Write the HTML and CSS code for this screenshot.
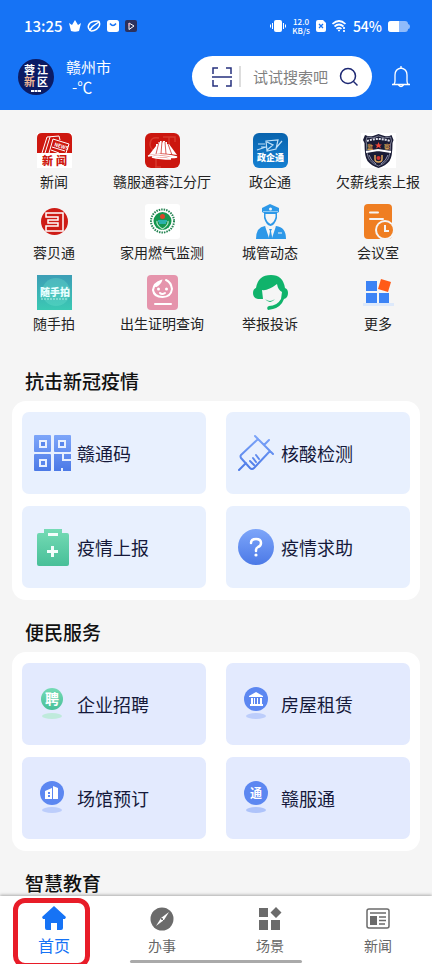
FILE: index.html
```html
<!DOCTYPE html>
<html lang="zh-CN">
<head>
    <meta charset="UTF-8">
    <meta name="viewport" content="width=device-width, initial-scale=1.0">
    <title>首页</title>
    <link rel="stylesheet" href="styles.css">
</head>
<body>
    <header class="header">
        <div class="status">
            <span class="status-time">13:25</span>
            <svg width="12" height="12" viewBox="0 0 12 12" fill="#fff"><path d="M0 3l3 2 3-5 3 5 3-2-2 8q-4 1.500-8 0z"/></svg>
            <svg width="14" height="12" viewBox="0 0 14 12" fill="none" stroke="#fff" stroke-width="1.500"><path d="M3 10C0 8 1 3 6 1.500q5-1 6 0c-1 2-5 3-7 5.500-1.500 2-3 4-2 3zM12 2c2 3-1 7-5 8.500-2 .7-4 .5-4-.5"/></svg>
            <svg width="12" height="12" viewBox="0 0 12 12"><rect width="12" height="12" rx="2.500" fill="#fff"/><path d="M3 3.500q3 4 6 0" fill="none" stroke="#1673f5" stroke-width="1.500"/></svg>
            <svg width="12" height="12" viewBox="0 0 12 12"><rect width="12" height="12" rx="2" fill="#2c315c"/><path d="M4 3l5 3-5 3.500z" fill="#2c315c" stroke="#fff"/><path d="M4 3v3" stroke="#e58aa5"/></svg>
            <span class="status-space"></span>
            <svg width="16" height="12" viewBox="0 0 16 12" fill="#fff"><rect x="4" width="8" height="12" rx="2"/><path d="M2 3h1v6H2zM0 4.500h1v3H0zM13 3h1v6h-1zM15 4.500h1v3h-1z"/></svg>
            <span class="status-speed">12.0<br>KB/s</span>
            <svg width="10" height="12" viewBox="0 0 10 12"><path d="M2 0h5l3 3v7q0 2-2 2H2q-2 0-2-2V2q0-2 2-2z" fill="#fff"/><path d="M3 4l4 4M7 4L3 8" stroke="#1673f5" stroke-width="1.300"/></svg>
            <svg width="15" height="12" viewBox="0 0 15 12" fill="none" stroke="#fff" stroke-width="1.700"><path d="M.5 4q6.500-6 13 0M2.500 6.500q4.500-4 9 0M4.500 8.800q2.500-2 5 0"/><path d="M6 10.500h2M12 7v2M12 10v2"/></svg>
            <span class="status-power">54%</span>
            <svg width="22" height="11" viewBox="0 0 22 11"><rect width="20" height="11" rx="3" fill="#8fbbfb"/><path d="M20 3q2 0 2 2.500T20 8z" fill="#8fbbfb"/><path d="M3 0h8v11H3q-3 0-3-3V3q0-3 3-3z" fill="#fff"/></svg>
        </div>
        <div class="topbar">
            <svg class="logo" width="36" height="36" viewBox="0 0 36 36">
                <circle cx="18" cy="18" r="18" fill="#0b1b64"/>
                <g font-size="11" font-weight="700" fill="#fff"><text x="6" y="15">蓉</text><text x="19" y="15">江</text><text x="6" y="27" fill="#eeb596">新</text><text x="19" y="27">区</text></g>
                <path d="M13 32h10" stroke="#fff" stroke-width="2" stroke-dasharray="3 .5"/>
            </svg>
            <div class="city"><span>赣州市</span><span class="city-temp">-℃</span></div>
            <form class="search">
                <svg width="20" height="20" viewBox="0 0 20 20" fill="none" stroke="#26317e" stroke-width="1.500"><path d="M1 7V1h5M14 1h5v6M1 13v6h5M14 19h5v-6M0 10h20"/></svg>
                <span class="search-line"></span>
                <input type="text" class="search-input" placeholder="试试搜索吧" aria-label="搜索">
                <button type="submit" class="icon-button" aria-label="搜索"><svg width="20" height="20" viewBox="0 0 20 20" fill="none" stroke="#1d2873" stroke-width="1.500"><circle cx="9" cy="9" r="7.500"/><path d="M14.500 14.500l4 4"/></svg></button>
            </form>
            <button type="button" class="icon-button bell" aria-label="消息"><svg width="18" height="22" viewBox="0 0 18 22" fill="none" stroke="#fff" stroke-width="1.300"><path d="M9 0v2M0 18.500h18M2 18q1-1 1-3V9q0-6 6-7 6 1 6 7v6q0 2 1 3M6.500 19q2.500 3 5 0"/></svg></button>
        </div>
    </header>

    <main class="content">
        <nav class="services">
            <a href="#" class="service">
                <svg width="35" height="35" viewBox="0 0 35 35"><rect width="35" height="35" fill="#fff"/><path d="M0 20V5q0-5 5-5h25q5 0 5 5v15z" fill="#ce170f"/><g fill="none" stroke="#fff"><path d="M5 20l5-16 12-1 1 4M8 20l5-16"/><path d="M12 20l4-14 16 5-3 9M15 14l13 4M14 17l8 3" /></g><text x="17" y="13" font-size="5" font-weight="700" fill="#fff" transform="rotate(17 17 13)">NEWS</text><text x="5" y="32" font-size="11" font-weight="900" fill="#ce170f">新</text><text x="19" y="32" font-size="11" font-weight="900" fill="#ce170f">闻</text></svg>
                <span>新闻</span>
            </a>
            <a href="#" class="service">
                <svg width="35" height="35" viewBox="0 0 35 35"><rect width="35" height="35" rx="6" fill="#cb160e"/><path d="M14 5Q5 3 5 12q1 7 9 5M18 4h12v5M24 4v16M11 23v11M10 34h6" fill="none" stroke="#d8392d" stroke-width="1.500"/><path d="M4 22l7-9v-2h2V9h2V8h2v2l1-2h2v1h2v2h2l8 11q-14-3-28 0z" fill="#fff"/><path d="M14 9l-3 12M17 8l-1 13M20 9l1 12M23 11l4 11" stroke="#cb160e" stroke-width=".7"/><path d="M3 23q14-3 29 1-5 1-10 0-10-1-15 0 8 2 19 2" fill="none" stroke="#fff" stroke-width="1.400"/></svg>
                <span>赣服通蓉江分厅</span>
            </a>
            <a href="#" class="service">
                <svg width="35" height="35" viewBox="0 0 35 35"><defs><linearGradient id="sky" x2="0" y2="1"><stop stop-color="#0863ad"/><stop offset="1" stop-color="#1580d2"/></linearGradient></defs><rect width="35" height="35" rx="6" fill="url(#sky)"/><path d="M13 8l12-1-2 9-9 2zM14 9l6 3-6 5M23 15l6-7M5 11h7M8 14h5M4 17l9-3" fill="none" stroke="#bfe0f8" stroke-width="1.200"/><text x="4" y="28" font-size="9" font-weight="900" fill="#fff">政企通</text></svg>
                <span>政企通</span>
            </a>
            <a href="#" class="service">
                <svg width="35" height="35" viewBox="0 0 35 35"><rect width="35" height="35" fill="#fff"/><path d="M17.500 1l6 2q4 1 7-1l2 5-1 3q0 14-3 18-4 5-11 7-7-2-11-7-3-4-3-18L2 7l2-5q4 2 8 1z" fill="#191b35"/><path d="M17.500 3l6 2 6-1 1 4-1 3q0 11-3 16-3 4-9 6-6-2-9-6-3-5-3-16L5 8l1-4 6 1z" fill="none" stroke="#a3a6ba" stroke-width=".7"/><path d="M6 8q11-4 23 0" fill="none" stroke="#dfe0e9" stroke-width="2" stroke-dasharray="2 1"/><text x="6" y="16" font-size="6" font-weight="700" fill="#d39c51">监</text><text x="23" y="16" font-size="6" font-weight="700" fill="#d39c51">察</text><path d="M17.500 9l1 2.500H21l-2 1.500 1 2.500-2.500-1.500-2.500 1.500 1-2.500-2-1.500h2.500z" fill="#ef4538"/><path d="M5 19l12-2 13 2" fill="none" stroke="#fff" stroke-width="1.800"/><path d="M14 22v4q0 3 3.500 3t3.500-3v-4" fill="none" stroke="#dba65e" stroke-width="1.500"/><circle cx="17.500" cy="25" r="2" fill="#d43232"/><path d="M8 22q2 6 7 9M27 22q-2 6-7 9" fill="none" stroke="#9296b3"/></svg>
                <span>欠薪线索上报</span>
            </a>
            <a href="#" class="service">
                <svg width="35" height="35" viewBox="0 0 35 35"><circle cx="17.500" cy="17.500" r="13.500" fill="#ce1c16"/><path d="M9 9h17v18H9v-5h12v-3H11v-3h10v-3H9z" fill="none" stroke="#fff" stroke-width="1.500"/></svg>
                <span>蓉贝通</span>
            </a>
            <a href="#" class="service">
                <svg width="35" height="35" viewBox="0 0 35 35"><rect width="35" height="35" rx="3" fill="#fff"/><circle cx="17.500" cy="17" r="11.500" fill="none" stroke="#258453" stroke-width="2" stroke-dasharray="1.500 1"/><circle cx="17.500" cy="17" r="9" fill="#15964f"/><path d="M12 17q-1 4 5.500 8 6.500-4 5.500-8" fill="none" stroke="#b9e7c8" stroke-width="1.200"/><circle cx="17.500" cy="12.500" r="2.500" fill="#db4427"/><path d="M13 17h9M14 19h7" stroke="#35bacc" stroke-width="1.500"/></svg>
                <span>家用燃气监测</span>
            </a>
            <a href="#" class="service">
                <svg width="35" height="35" viewBox="0 0 35 35" fill="#2d98e8"><path d="M9 4l8-4 9 4v4l-2 1v5q-2 7-6.500 8Q13 21 11 14V9L9 8z"/><path d="M12.500 10h10v3q-1 5-5 7-4-2-5-7z" fill="#f5f5f5"/><circle cx="17.500" cy="5" r="1.500" fill="#f5f5f5"/><path d="M10 7.500h15" stroke="#8cc9f4"/><path d="M3 35q0-12 9-13l5.500 4 5.500-4q10 1 10 13z"/><path d="M12 22l4 12 1.500-6L19 34l4-12-5.500 3z" fill="#f5f5f5"/><path d="M16 25h3l-1 2 1 6-1.500 2-1.500-2 1-6z"/><path d="M25 29h4" stroke="#f5f5f5"/></svg>
                <span>城管动态</span>
            </a>
            <a href="#" class="service">
                <svg width="35" height="35" viewBox="0 0 35 35"><rect x="3" y="0" width="28" height="35" rx="4" fill="#ef7e22"/><path d="M9 8.500h8M9 15h13" stroke="#f5f5f5" stroke-width="2" stroke-linecap="round"/><circle cx="24" cy="26" r="10" fill="#f5f5f5"/><circle cx="24" cy="26" r="8" fill="#ef7e22"/><path d="M24 21v6h4" fill="none" stroke="#f5f5f5" stroke-width="2"/></svg>
                <span>会议室</span>
            </a>
            <a href="#" class="service">
                <svg width="35" height="35" viewBox="0 0 35 35"><defs><linearGradient id="sea" x2="0" y2="1"><stop stop-color="#3c9eb6"/><stop offset="1" stop-color="#3bc9b3"/></linearGradient></defs><rect width="35" height="35" fill="url(#sea)"/><circle cx="19" cy="17" r="14" fill="#69dfce" opacity=".35"/><text x="3" y="21" font-size="10" font-weight="900" fill="#e9ffff">随手拍</text><path d="M4 24h27" stroke="#b9f0e9" stroke-dasharray="2 1"/></svg>
                <span>随手拍</span>
            </a>
            <a href="#" class="service">
                <svg width="35" height="35" viewBox="0 0 35 35"><rect x="2" width="31" height="35" rx="4" fill="#e594ac"/><g fill="none" stroke="#fff" stroke-width="2" stroke-linecap="round"><path d="M21 5q5 2 6 9-1 8-9.500 8T8 15q1-7 8-9-1 3-5 5"/><path d="M15 18q2 2 5 0M10 29h16"/></g><circle cx="13.500" cy="14" r="1.500" fill="#fff"/><circle cx="21.500" cy="14" r="1.500" fill="#fff"/></svg>
                <span>出生证明查询</span>
            </a>
            <a href="#" class="service">
                <svg width="35" height="35" viewBox="0 0 35 35"><path d="M3 13Q5 0 18 0q12 0 14 13 3 1 3 5 0 5-4 6-3 8-11 10l-5 1q-2-3 1-4 8 0 12-7l1-7q-4-2-5-8Q15 16 9 15l1 9H5q-5-1-5-6 0-4 3-5z" fill="#10b36b"/><path d="M12 24q5 4 10 0-5 6-10 0z" fill="#10b36b"/></svg>
                <span>举报投诉</span>
            </a>
            <a href="#" class="service">
                <svg width="35" height="35" viewBox="0 0 35 35"><path d="M2 28h31v3H2z" fill="#dde9fb"/><path d="M5 6h11v10H5zM5 18h11v10H5zM18 18h10v10H18z" fill="#3c83f5"/><path d="M20 4l10 3-3 10-10-3z" fill="#ff5b18"/></svg>
                <span>更多</span>
            </a>
        </nav>

        <section class="section">
            <h2 class="section-title">抗击新冠疫情</h2>
            <div class="card">
                <a href="#" class="tile">
                    <svg width="38" height="38" viewBox="0 0 38 38"><defs><linearGradient id="blue" gradientUnits="userSpaceOnUse" x1="0" y1="0" x2="0" y2="38"><stop stop-color="#7fa7fa"/><stop offset="1" stop-color="#4a78e6"/></linearGradient></defs><path d="M2 1h15q1 0 1 1v15q0 1-1 1H2q-1 0-1-1V2q0-1 1-1zM22 1h15q1 0 1 1v15q0 1-1 1H22q-1 0-1-1V2q0-1 1-1zM2 20h15q1 0 1 1v15q0 1-1 1H2q-1 0-1-1V21q0-1 1-1zM21 20h8v7h9v10h-8v-3h-2v3h-7zM31 20h7v5h-7z" fill="url(#blue)"/><path d="M6 6h8v8H6zM25 6h8v8h-8zM6 25h8v8H6z" fill="#e8f0fe"/><path d="M8 8h4v4H8zM27 8h4v4h-4zM8 27h4v4H8z" fill="#5a87ec"/></svg>
                    <span>赣通码</span>
                </a>
                <a href="#" class="tile">
                    <svg width="38" height="38" viewBox="0 0 38 38" fill="none" stroke="url(#blue)" stroke-width="2" stroke-linecap="round" stroke-linejoin="round"><path d="M18 2l18 18M27 11l5-5M21 5L4 21q-1 1 0 3l9 10q2 2 4 0l16-17M9 29l-7 7M13 27l4 4M16 24l3 4M19 21l3 4"/></svg>
                    <span>核酸检测</span>
                </a>
                <a href="#" class="tile">
                    <svg width="38" height="38" viewBox="0 0 38 38"><defs><linearGradient id="green" x2="0" y2="1"><stop stop-color="#75dbb5"/><stop offset="1" stop-color="#48bf98"/></linearGradient></defs><path d="M11 1h18v4h5q2 0 2 2v29q0 2-2 2H6q-2 0-2-2V7q0-2 2-2h5z" fill="url(#green)"/><path d="M15 5h10v3H15zM18 18h3v4h4v3h-4v4h-3v-4h-4v-3h4z" fill="#f3fdfb"/></svg>
                    <span>疫情上报</span>
                </a>
                <a href="#" class="tile">
                    <svg width="38" height="38" viewBox="0 0 38 38"><circle cx="19" cy="19" r="18" fill="url(#blue)"/><path d="M14 15q0-4 5-4t5 4q0 3-3 4-2 1-2 3v1" fill="none" stroke="#fff" stroke-width="2.500" stroke-linecap="round"/><circle cx="19" cy="27" r="1.600" fill="#fff"/></svg>
                    <span>疫情求助</span>
                </a>
            </div>
        </section>

        <section class="section">
            <h2 class="section-title">便民服务</h2>
            <div class="card card-violet">
                <a href="#" class="tile">
                    <svg width="38" height="38" viewBox="0 0 38 38"><ellipse cx="19" cy="31" rx="10" ry="3" fill="#bfeadc"/><circle cx="19" cy="14" r="11" fill="url(#green)"/><text x="12" y="19" font-size="14" font-weight="700" fill="#fff">聘</text></svg>
                    <span>企业招聘</span>
                </a>
                <a href="#" class="tile">
                    <svg width="38" height="38" viewBox="0 0 38 38"><ellipse cx="19" cy="31" rx="10" ry="3" fill="#bccdfb"/><circle cx="19" cy="14" r="12" fill="#5c87f1"/><path d="M12 11l7-4 7 4v1H12zM14 13h2v6h-2zM17 13h1v6h-1zM20 13h1v6h-1zM23 13h2v6h-2zM13 19h13v2H13z" fill="#fff"/></svg>
                    <span>房屋租赁</span>
                </a>
                <a href="#" class="tile">
                    <svg width="38" height="38" viewBox="0 0 38 38"><ellipse cx="19" cy="31" rx="10" ry="3" fill="#bccdfb"/><circle cx="19" cy="14" r="12" fill="#5c87f1"/><path d="M12 20v-8l7-3v11zM20 20V7l5 2v11z" fill="#fff"/><path d="M15 13h2v2h-2zM15 16h2v2h-2z" fill="#5c87f1"/></svg>
                    <span>场馆预订</span>
                </a>
                <a href="#" class="tile">
                    <svg width="38" height="38" viewBox="0 0 38 38"><ellipse cx="19" cy="31" rx="10" ry="3" fill="#aec3fa"/><circle cx="19" cy="14" r="12" fill="#5c87f1"/><text x="13" y="19" font-size="12" font-weight="700" fill="#fff">通</text></svg>
                    <span>赣服通</span>
                </a>
            </div>
        </section>

        <section class="section">
            <h2 class="section-title">智慧教育</h2>
        </section>
    </main>

    <nav class="tabbar">
        <a href="#" class="tab active">
            <svg width="26" height="26" viewBox="0 0 26 26"><path d="M13 1l12 11-1 2h-2v9q0 2-2 2h-4v-7h-6v7H6q-2 0-2-2v-9H2l-1-2z" fill="#1673f5"/></svg>
            <span>首页</span>
        </a>
        <a href="#" class="tab">
            <svg width="26" height="26" viewBox="0 0 26 26"><circle cx="13" cy="14" r="11.500" fill="#6b6b6b"/><path d="M20 7l-5 8-8 6 5-8z" fill="#fff"/><path d="M11 12l4 4" stroke="#6b6b6b"/><circle cx="13" cy="14" r="1" fill="#6b6b6b"/></svg>
            <span>办事</span>
        </a>
        <a href="#" class="tab">
            <svg width="26" height="26" viewBox="0 0 26 26" fill="#6b6b6b"><path d="M2 3h9v9H2zM2 15h9v10H2zM14 15h9v10h-9zM19 2l5.500 5.500L19 13l-5.500-5.500z"/></svg>
            <span>场景</span>
        </a>
        <a href="#" class="tab">
            <svg width="26" height="26" viewBox="0 0 26 26"><rect x="2" y="4" width="22" height="19" rx="2" fill="none" stroke="#6b6b6b" stroke-width="1.500"/><path d="M5 11h7v9H5z" fill="#6b6b6b"/><path d="M5 8h16M14 12h7M14 15.500h7M14 19h6" stroke="#6b6b6b" stroke-width="1.600"/></svg>
            <span>新闻</span>
        </a>
        <span class="marker"></span>
        <span class="gesture"></span>
    </nav>
</body>
</html>
```
FILE: styles.css
```css
* {
    box-sizing: border-box;
}

body {
    display: flex;
    flex-direction: column;
    height: 100vh;
    margin: 0;
    background-color: #f5f5f5;
    color: #222;
    font-family: "Noto Sans CJK SC", sans-serif;
    font-size: 14px;
    line-height: 20px;
    overflow: hidden;
}

a {
    color: inherit;
    text-decoration: none;
}

svg {
    display: block;
    flex-shrink: 0;
}

/* Header */
.header {
    flex-shrink: 0;
    padding: 16px 22px 13px 18px;
    background-color: #1673f5;
    color: #fff;
}

.status {
    display: flex;
    align-items: center;
    gap: 6px;
    height: 20px;
    padding-left: 6px;
    font-weight: 500;
}

.status-time {
    font-size: 15px;
}

.status-space {
    flex: 1;
}

.status-speed {
    font-size: 8px;
    line-height: 9px;
    text-align: center;
}

.topbar {
    display: flex;
    align-items: center;
    margin-top: 20px;
}

.city {
    display: flex;
    flex: 1;
    flex-direction: column;
    padding-left: 12px;
    font-size: 15px;
}

.city-temp {
    padding-left: 6px;
}

.search {
    display: flex;
    align-items: center;
    width: 180px;
    height: 41px;
    padding: 0 13px 0 20px;
    background-color: #fff;
    border-radius: 21px;
}

.search-line {
    width: 2px;
    height: 21px;
    margin: 0 12px 0 7px;
    background-color: #ddd;
}

.search-input {
    flex: 1;
    min-width: 0;
    padding: 0;
    border: none;
    outline: none;
    background: none;
    font-family: inherit;
    font-size: 15px;
}

.search-input::placeholder {
    color: #808080;
}

.icon-button {
    padding: 0;
    border: none;
    background: none;
    cursor: pointer;
}

.bell {
    margin-left: 20px;
}

/* Content */
.content {
    flex: 1;
    min-height: 0;
    padding-top: 23px;
    overflow-y: auto;
    scrollbar-width: none;
}

.services {
    display: grid;
    grid-template-columns: repeat(4, 1fr);
    row-gap: 13px;
    padding-bottom: 16px;
}

.service {
    display: flex;
    flex-direction: column;
    align-items: center;
    gap: 3px;
    white-space: nowrap;
}

.section {
    padding: 18px 12px 0;
}

.section-title {
    margin: 0 0 7px 13px;
    color: #111;
    font-size: 19px;
    font-weight: 500;
    line-height: 27px;
}

.card {
    display: grid;
    grid-template-columns: 1fr 1fr;
    gap: 12px 20px;
    padding: 11px 10px 12px;
    background-color: #fff;
    border-radius: 14px;
}

.tile {
    display: flex;
    align-items: center;
    gap: 6px;
    height: 82px;
    padding-left: 11px;
    background-color: #e8f0fe;
    border-radius: 7px;
    color: #15193a;
    font-size: 18px;
}

.card-violet .tile {
    background-color: #e3eafe;
}

/* Bottom tabs */
.tabbar {
    position: relative;
    display: grid;
    flex-shrink: 0;
    grid-template-columns: repeat(4, 1fr);
    height: 68px;
    padding-top: 9px;
    background-color: #fff;
    box-shadow: 0 -1px 3px #aaa;
}

.tab {
    display: flex;
    flex-direction: column;
    align-items: center;
    gap: 4px;
    color: #666;
}

.active {
    color: #1673f5;
    font-size: 16px;
}

/* Highlight around the current tab, runs off the bottom edge */
.marker {
    position: absolute;
    top: 2px;
    left: 13px;
    width: 77px;
    height: 70px;
    border: 5px solid #e81c28;
    border-radius: 12px;
}

.gesture {
    position: absolute;
    bottom: 1px;
    left: 30%;
    width: 40%;
    height: 3px;
    background-color: #aaa;
    border-radius: 2px;
}
```
